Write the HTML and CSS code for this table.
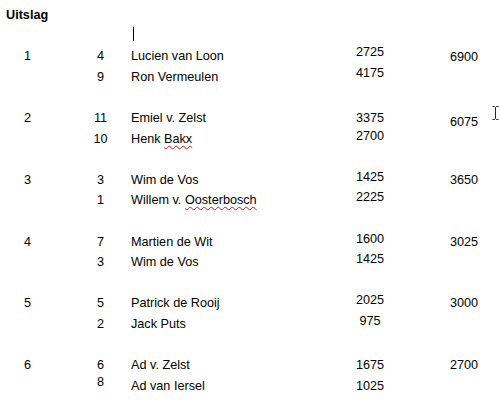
FILE: index.html
```html
<!DOCTYPE html>
<html>
<head>
<meta charset="utf-8">
<link rel="stylesheet" href="styles.css">
</head>
<body>
<div class="page">
  <div class="title">Uitslag</div>
  <div class="caret-line"><span class="caret"></span></div>

  <div class="group">
    <div class="rank">1</div>
    <div class="no"><div>4</div><div>9</div></div>
    <div class="name"><div>Lucien van Loon</div><div>Ron Vermeulen</div></div>
    <div class="score up4"><div>2725</div><div>4175</div></div>
    <div class="total dn1">6900</div>
  </div>

  <div class="group">
    <div class="rank">2</div>
    <div class="no"><div>11</div><div>10</div></div>
    <div class="name"><div>Emiel v. Zelst</div><div>Henk <span class="sp">Bakx</span></div></div>
    <div class="score"><div>3375</div><div class="up3">2700</div></div>
    <div class="total dn4">6075</div>
  </div>

  <div class="group">
    <div class="rank">3</div>
    <div class="no"><div>3</div><div>1</div></div>
    <div class="name"><div>Wim de Vos</div><div>Willem v. <span class="sp">Oosterbosch</span></div></div>
    <div class="score up3"><div>1425</div><div>2225</div></div>
    <div class="total">3650</div>
  </div>

  <div class="group">
    <div class="rank">4</div>
    <div class="no"><div>7</div><div>3</div></div>
    <div class="name"><div>Martien de Wit</div><div>Wim de Vos</div></div>
    <div class="score up3"><div>1600</div><div>1425</div></div>
    <div class="total">3025</div>
  </div>

  <div class="group">
    <div class="rank">5</div>
    <div class="no"><div>5</div><div>2</div></div>
    <div class="name"><div>Patrick de Rooij</div><div>Jack Puts</div></div>
    <div class="score up3"><div>2025</div><div>975</div></div>
    <div class="total">3000</div>
  </div>

  <div class="group">
    <div class="rank">6</div>
    <div class="no"><div>6</div><div class="up4">8</div></div>
    <div class="name"><div>Ad v. Zelst</div><div>Ad van Iersel</div></div>
    <div class="score"><div>1675</div><div>1025</div></div>
    <div class="total">2700</div>
  </div>
</div>

<svg class="ibeam" width="9" height="16" viewBox="0 0 9 16">
  <path d="M1.5 1.5h2l1 1 1-1h2M4.5 2.5v11M1.5 14.5h2l1-1 1 1h2" fill="none" stroke="#222" stroke-width="1"/>
</svg>
</body>
</html>
```
FILE: styles.css
```css
html, body {
  margin: 0;
  padding: 0;
  background: #fff;
}

body {
  font-family: "Liberation Sans", Arial, sans-serif;
  font-size: 12.67px;
  line-height: 20.6px;
  color: #000;
  position: relative;
  width: 500px;
  height: 409px;
  overflow: hidden;
}

.page {
  padding-top: 5px;
}

.title {
  font-weight: bold;
  padding-left: 6px;
  height: 20.6px;
}

.caret-line {
  height: 20.6px;
  display: flex;
  align-items: flex-start;
  padding-left: 133px;
}

.caret {
  width: 1px;
  height: 14px;
  margin-top: 1.5px;
  background: #000;
}

.group {
  display: grid;
  grid-template-columns: 70px 61px 199px 80px 1fr;
  margin-bottom: 20.6px;
}

.rank {
  text-align: center;
  padding-right: 15px;
}

.no {
  text-align: center;
}

.score {
  text-align: center;
}

.total {
  text-align: center;
  padding-left: 18px;
}

.up4 { margin-top: -4px; }
.up3 { margin-top: -3px; }
.dn1 { margin-top: 1px; }
.dn4 { margin-top: 4px; }

.sp {
  text-decoration: underline wavy #d01c1c;
  text-decoration-thickness: 1px;
  text-underline-offset: 2px;
}

.ibeam {
  position: absolute;
  left: 491px;
  top: 105px;
}
```
